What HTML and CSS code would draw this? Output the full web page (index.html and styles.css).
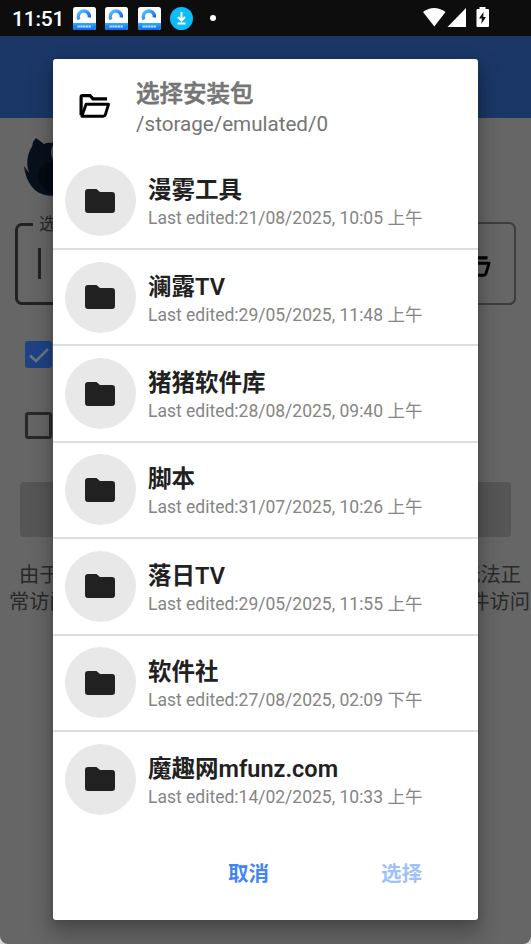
FILE: index.html
```
<!DOCTYPE html>
<html lang="zh-CN">
<head>
<meta charset="utf-8">
<title>选择安装包</title>
<link rel="stylesheet" href="styles.css">
</head>
<body>
<svg class="defs" width="0" height="0">
  <defs>
    <linearGradient id="arc" x1="0" x2="1" y1="0" y2="1"><stop offset="0" stop-color="#55c8ff"/><stop offset="1" stop-color="#1558f0"/></linearGradient>
    <linearGradient id="strip" x1="0" x2="0" y1="0" y2="1"><stop offset="0" stop-color="#25aefc"/><stop offset="1" stop-color="#1565f2"/></linearGradient>
    <symbol id="app" viewBox="0 0 23 23">
      <rect width="23" height="23" rx="2.5" fill="#fff"/>
      <path d="M6 12.5A5.6 5.6 0 1 1 16.3 10.5" fill="none" stroke="url(#arc)" stroke-width="3.4"/>
      <path d="M0 16H23V20.5Q23 23 20.5 23H2.5Q0 23 0 20.5Z" fill="url(#strip)"/>
      <path d="M4.5 19.5H18" stroke="#b4dcff" stroke-width="2" stroke-dasharray="2.4 .4"/>
    </symbol>
    <symbol id="open" viewBox="0 0 31 24">
      <path d="M1.6 21V3Q1.6 1.6 3 1.6H10.5L13.5 4.8H27.5" fill="none" stroke="currentColor" stroke-width="3.2"/>
      <path d="M2.3 22.3L6.6 10.3H29L25.8 20.8Q25.3 22.3 23.6 22.3Z" fill="none" stroke="currentColor" stroke-width="2.9" stroke-linejoin="round"/>
    </symbol>
    <symbol id="folder" viewBox="0 0 30 24"><path d="M3 0H11.5L15 3H27Q30 3 30 6V21Q30 24 27 24H3Q0 24 0 21V3Q0 0 3 0Z" fill="#212121"/></symbol>
  </defs>
</svg>
<div class="screen">
  <header class="status">
    <span class="clock">11:51</span>
    <svg class="app"><use href="#app"/></svg>
    <svg class="app"><use href="#app"/></svg>
    <svg class="app"><use href="#app"/></svg>
    <svg class="app" viewBox="0 0 23 23"><circle cx="11.5" cy="11.5" r="11.5" fill="#0bbcfb"/><path d="M11.5 5V13M8 10L11.5 13.5L15 10M7.5 16.5H15.5" fill="none" stroke="#fff" stroke-width="2"/></svg>
    <span class="dot"></span>
    <svg class="signals" width="67" height="22" viewBox="0 0 67 22" fill="#fff"><path d="M0 5Q11-3.2 22.5 5L11.3 19.5Z"/><path d="M43 1V20H24.5Z"/><path d="M56.5 0H62.5V2H65Q66 2 66 3V19Q66 20 65 20H54.5Q53.5 20 53.5 19V3Q53.5 2 54.5 2H56.5Z"/><path d="M60.5 5L56 11.5H59L58.3 17L63 10H60.3Z" fill="#0d0d0d"/></svg>
  </header>
  <div class="appbar"></div>
  <main class="page">
    <svg class="logo" width="58" height="60" viewBox="0 0 58 60"><path d="M12 0L20 6Q24 4 27 5L36 2V57Q8 62 1 34L0 28L5 35Q1 23 6 12Q9 8 9 4Z" fill="#07111c"/><path d="M29 7Q25 14 29 22" fill="#555b62"/><path d="M14 34Q18 23 31 25V55Q12 51 14 34Z" fill="#030b14"/></svg>
    <fieldset class="field"><legend>选</legend><span class="caret"></span></fieldset>
    <div class="check on"><svg width="28" height="28" viewBox="0 0 28 28"><path d="M5 14.5L11 20L23 8" fill="none" stroke="#6e7580" stroke-width="2.6"/></svg></div>
    <div class="check"></div>
    <div class="install"></div>
    <div class="note first"><span>由于</span><span>无法正</span></div>
    <div class="note"><span>常访问</span><span>件访问</span></div>
  </main>
  <div class="edge"><svg width="31" height="24"><use href="#open"/></svg></div>
  <section class="dialog">
    <div class="head">
      <svg width="32" height="24" preserveAspectRatio="none"><use href="#open"/></svg>
      <div><h1>选择安装包</h1><p>/storage/emulated/0</p></div>
    </div>
    <ul class="list">
      <li><span class="avatar"><svg><use href="#folder"/></svg></span><div><h2>漫雾工具</h2><p>Last edited:21/08/2025, 10:05 上午</p></div></li>
      <li><span class="avatar"><svg><use href="#folder"/></svg></span><div><h2>澜露TV</h2><p>Last edited:29/05/2025, 11:48 上午</p></div></li>
      <li><span class="avatar"><svg><use href="#folder"/></svg></span><div><h2>猪猪软件库</h2><p>Last edited:28/08/2025, 09:40 上午</p></div></li>
      <li><span class="avatar"><svg><use href="#folder"/></svg></span><div><h2>脚本</h2><p>Last edited:31/07/2025, 10:26 上午</p></div></li>
      <li><span class="avatar"><svg><use href="#folder"/></svg></span><div><h2>落日TV</h2><p>Last edited:29/05/2025, 11:55 上午</p></div></li>
      <li><span class="avatar"><svg><use href="#folder"/></svg></span><div><h2>软件社</h2><p>Last edited:27/08/2025, 02:09 下午</p></div></li>
      <li><span class="avatar"><svg><use href="#folder"/></svg></span><div><h2>魔趣网mfunz.com</h2><p>Last edited:14/02/2025, 10:33 上午</p></div></li>
    </ul>
    <footer class="actions"><span>取消</span><span class="disabled">选择</span></footer>
  </section>
</div>
</body>
</html>
```
FILE: styles.css
```
* { box-sizing: border-box; }
body { margin: 0; background: #d8d8d8; font-family: Roboto, "Noto Sans CJK SC", sans-serif; }
h1, h2, p, ul { margin: 0; padding: 0; }
.defs { position: absolute; }
.screen { position: relative; width: 531px; height: 944px; overflow: hidden; background: #666; border-radius: 0 0 8px 8px; }
.status { height: 36px; padding: 0 41px 0 12px; display: flex; align-items: center; background: #0d0d0d; color: #fff; }
.clock { width: 60.5px; font-size: 21px; font-weight: 500; line-height: 36px; margin-top: 1px; letter-spacing: -.2px; white-space: nowrap; }
.app { width: 23px; height: 23px; margin-right: 9.5px; flex: none; }
.dot { width: 6px; height: 6px; border-radius: 50%; background: #fff; margin-left: 7px; }
.signals { margin-left: auto; margin-top: -1px; }
.appbar { height: 82px; background: #1b3767; }
.page { padding: 0 15px; color: #292929; }
.logo { display: block; margin: 20px 0 0 9px; }
.field { height: 92px; margin: 15px 0 0; padding: 0; border: 3px solid #222; border-radius: 7px; border-right: 2px solid #3e3e3e; }
.field legend { margin-left: 15px; padding: 0 6px; font-size: 17.5px; line-height: 22px; }
.caret { display: block; width: 3px; height: 31px; margin: 13px 0 0 20px; background: #222; }
.check { width: 27px; height: 27px; margin: 44px 0 0 10px; border: 3px solid #292929; border-radius: 3px; }
.check.on { margin-top: 36px; border: 0; background: #1e4386; }
.check.on svg { display: block; }
.install { height: 55px; margin: 43px 5px 0; border-radius: 4px; background: #565656; }
.note { display: flex; justify-content: space-between; margin: 0 -14px 0 -6px; font-size: 20.3px; line-height: 27px; }
.note.first { margin: 25px -5px 0 4px; }
.edge { position: absolute; left: 459px; top: 222px; width: 57px; height: 83px; border: 2px solid #3e3e3e; border-left: 0; border-radius: 0 7px 7px 0; background: #666; padding: 29px 0 0 1px; }
.dialog { position: absolute; left: 53px; top: 59px; width: 425px; height: 861px; display: flex; flex-direction: column; background: #fff; border-radius: 3px; box-shadow: 0 12px 22px 3px rgba(0,0,0,.25), 0 2px 8px rgba(0,0,0,.15); }
.head { height: 94px; padding: 20px 0 0 26px; display: flex; gap: 25px; color: #000; flex: none; }
.head svg { margin-top: 15px; }
.head h1 { font-size: 23.5px; line-height: 30px; font-weight: 500; color: #757575; -webkit-text-stroke: .6px #757575; }
.head p { font-size: 20.6px; line-height: 30px; color: #757575; }
.list { list-style: none; }
.list li { height: 96.4px; padding-left: 12px; display: flex; align-items: center; gap: 12px; border-bottom: 2px solid #dedede; }
.list li:first-child { height: 97px; }
.list li:last-child { border-color: transparent; }
.avatar { width: 71px; height: 71px; border-radius: 50%; background: #e8e8e8; display: flex; align-items: center; justify-content: center; }
.avatar svg { width: 30px; height: 24px; margin-right: 1px; }
.list li > div { padding-top: 5px; }
.list h2 { font-size: 23.5px; line-height: 30px; font-weight: 600; color: #212121; }
.list p { font-size: 17.5px; line-height: 26px; color: #858585; white-space: nowrap; }
.actions { display: flex; justify-content: flex-end; gap: 112px; padding: 31px 56px 0 0; color: #4285f4; font-size: 20.5px; line-height: 30px; font-weight: 600; }
.disabled { color: #a0c2fa; }
```
